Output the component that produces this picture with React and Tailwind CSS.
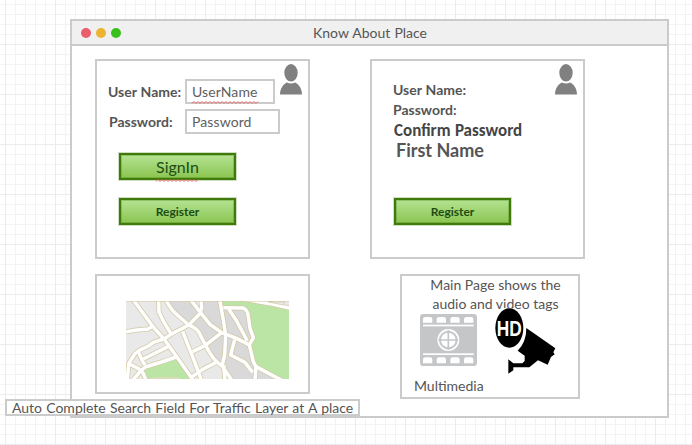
import React from "react";

const ROADS = [
  "M128 102 L188 184 L222 222 L265 282 L310 346",
  "M104 201 L140 195 L174 192 L188 184",
  "M206 104 L207 142 L222 172 L243 206",
  "M226 102 Q245 138 262 150 L296 180",
  "M222 222 L243 208 L296 180 L328 148 L335 130 L333 104",
  "M302 104 L331 142 L360 178 L395 203 L440 220 L478 240",
  "M389 104 L400 165 L407 210 L404 270 L396 303",
  "M296 180 Q325 190 333 215 L348 243 Q368 285 396 303 L426 346",
  "M278 200 L300 255 L325 320 L334 346",
  "M308 260 L345 242 L395 203",
  "M302 338 L340 312 L378 292",
  "M400 128 L460 129 Q474 136 475 155 L480 190 L490 218 L478 240 L490 290 L498 305 L575 346",
  "M416 132 L440 168 L472 228",
  "M434 224 L422 270 L465 292 L488 322",
  "M498 305 L495 346",
  "M450 101 L540 116 L602 130",
  "M222 222 L190 232 L175 243 L148 256 L135 266 L116 296 L112 346",
  "M146 262 L158 290 L166 300",
  "M234 245 L160 282",
  "M258 276 L215 291 L166 306 L152 318",
  "M116 296 L148 312 L160 325 L168 346",
  "M152 318 L128 346",
  "M401 300 L405 346",
];

function StreetMap() {
  return (
    <svg className="block h-[78px] w-[163px]" viewBox="108 108 489 234" preserveAspectRatio="none">
      <rect x="108" y="108" width="489" height="234" fill="#e9e9e9" />
      <path
        fill="#d9d9d9"
        d="M228 108H300L330 142L296 180L262 150Z M335 108H389L400 170V203L360 178L328 142Z M296 180L328 146L395 203L345 240L330 205Z M345 240L407 205L404 270L396 303Z M395 128H460L475 150L490 220L478 240L404 208Z M404 208L478 240L495 342H425L396 303Z M498 305L570 342H495Z"
      />
      <path fill="#bbe5a5" d="M389 108H480L597 130V342H572L498 305L478 240L490 218L475 140L460 129H395Z" />
      <path fill="#bbe5a5" d="M160 314L262 281L304 342H166Z" />
      <g fill="none" stroke="#d3c9a4" strokeWidth="15" strokeLinejoin="round">
        {ROADS.map((d) => <path key={d} d={d} />)}
      </g>
      <g fill="none" stroke="#fff" strokeWidth="10.5" strokeLinejoin="round">
        {ROADS.map((d) => <path key={d} d={d} />)}
      </g>
      <path d="M108 109H597" stroke="#d3c9a4" strokeWidth="2" />
      <path d="M535 111L580 120L584 111Z" fill="#e9e9e9" stroke="#d3c9a4" strokeWidth="2" />
      <path d="M180 341Q225 335 270 341" fill="none" stroke="#e7d9c0" strokeWidth="4" />
    </svg>
  );
}

function FilmIcon() {
  return (
    <svg className="block h-[52px] w-[57px]" viewBox="75 138 171 156">
      <rect x="75" y="138" width="171" height="156" rx="10" fill="#c5c6c8" />
      <g fill="#fff">
        {[84, 125, 166, 207].map((x) => (
          <g key={x}>
            <path d={`M${x} 164V153Q${x} 147 ${x + 7} 147H${x + 21}Q${x + 28} 147 ${x + 28} 153V164Z`} />
            <path d={`M${x} 286V275Q${x} 268 ${x + 7} 268H${x + 21}Q${x + 28} 268 ${x + 28} 275V286Z`} />
          </g>
        ))}
        <rect x="84" y="170" width="152" height="5" />
        <rect x="84" y="256" width="152" height="5" />
        <circle cx="160" cy="216" r="33" />
      </g>
      <circle cx="160" cy="216" r="25" fill="none" stroke="#c5c6c8" strokeWidth="6" />
      <path d="M160 186V246M130 216H190" stroke="#c5c6c8" strokeWidth="5" />
    </svg>
  );
}

function CameraIcon() {
  return (
    <svg className="block h-[66px] w-[61px]" viewBox="299 121 183 198">
      <path d="M393 181L480 242L474 254L478 260L467 268L457 291L428 278L402 299H354V308L339 318V275L354 287H381L388 280V264L367 249Q393 224 393 181Z" />
      <ellipse cx="342" cy="181" rx="50" ry="64" fill="#fff" />
      <ellipse cx="342" cy="181" rx="42" ry="59" />
      <text
        x="304"
        y="206"
        textLength="75"
        lengthAdjust="spacingAndGlyphs"
        fill="#fff"
        className="font-['Liberation_Sans'] text-[68px] font-bold"
      >
        HD
      </text>
    </svg>
  );
}

function UserIcon() {
  return (
    <svg className="block h-[31px] w-[22px]" viewBox="0 0 22 31" fill="#808080">
      <ellipse cx="11" cy="8.8" rx="6.7" ry="8.7" />
      <path d="M0 30.5C0 24 4 19.5 7 18.5Q11 20.5 15 18.5C18 19.5 22 24 22 30.5Z" />
    </svg>
  );
}

function Squiggle({ width }) {
  const points = Array.from({ length: Math.floor(width / 2) + 1 }, (_, i) => `${i * 2},${i % 2 ? 0.5 : 2.5}`).join(" ");
  return (
    <svg className="absolute left-0 block h-[3px] overflow-visible" width={width} height="3">
      <polyline points={points} fill="none" stroke="#f05a5a" strokeWidth="0.9" />
    </svg>
  );
}

function GreenButton({ children }) {
  return (
    <div className="flex h-[27px] w-[117px] items-center justify-center border-2 border-[#407a0b] bg-linear-to-b from-[#b4e391] to-[#8bc550] text-[#1d4d12] shadow-[0_0_0_1px_rgba(64,122,11,0.25),inset_0_0_0_1px_rgba(64,122,11,0.3)]">
      {children}
    </div>
  );
}

export default function App() {
  return (
    <div className="relative h-[445px] w-[692px] overflow-hidden bg-white bg-[linear-gradient(to_right,#ececec_1px,transparent_1px),linear-gradient(to_bottom,#ececec_1px,transparent_1px),linear-gradient(to_right,#f3f3f3_1px,transparent_1px),linear-gradient(to_bottom,#f3f3f3_1px,transparent_1px)] bg-[size:50px_50px,50px_50px,10px_10px,10px_10px] bg-[position:5px_0,0_44px,5px_0,0_4px] pl-[70px] pt-[19px] font-['Lato',sans-serif] text-[14px] text-[#555]">
      <div className="h-[399px] w-[599px] border-2 border-[#cbcbcb] bg-white">
        <header className="flex h-[25px] items-center border-b-2 border-[#cbcbcb] bg-[#f0f0f0] pl-[9px]">
          <div className="flex w-[40px] gap-[5px]">
            <i className="size-[10px] rounded-full bg-[#eb5d6b]" />
            <i className="size-[10px] rounded-full bg-[#edb431]" />
            <i className="size-[10px] rounded-full bg-[#3bbf1d]" />
          </div>
          <h1 className="flex-1 pr-[48px] text-center leading-[20px] [word-spacing:0.5px]">Know About Place</h1>
        </header>
        <main className="flex flex-col gap-[15px] pl-[23px] pt-[13px]">
          <div className="flex gap-[60px]">
            <section className="flex h-[200px] w-[215px] flex-col border-2 border-[#cbcbcb]">
              <div className="flex h-[78px]">
                <div className="flex w-[183px] flex-col gap-[5px] pl-[11px] pt-[18px]">
                  <div className="flex h-[25px] items-center">
                    <label className="w-[77px] shrink-0 whitespace-nowrap font-bold [word-spacing:0.5px]">User Name:</label>
                    <div className="relative flex h-[25px] w-[90px] shrink-0 items-center border-2 border-[#cbcbcb] pl-[5px] text-[#606060]">
                      <span className="tracking-[0.1px]">UserName</span>
                      <div className="absolute left-[5px] top-[20px]"><Squiggle width={66} /></div>
                    </div>
                  </div>
                  <div className="flex h-[25px] items-center">
                    <label className="w-[77px] shrink-0 pl-px font-bold">Password:</label>
                    <div className="flex h-[25px] w-[95px] shrink-0 items-center border-2 border-[#cbcbcb] pl-[5px] tracking-[0.1px] text-[#606060]">Password</div>
                  </div>
                </div>
                <div className="pt-[3px]"><UserIcon /></div>
              </div>
              <div className="flex flex-col gap-[18px] pl-[22px] pt-[14px]">
                <GreenButton>
                  <span className="relative text-[16px] leading-[20px]">
                    SignIn
                    <span className="absolute left-0 top-[22px]"><Squiggle width={42} /></span>
                  </span>
                </GreenButton>
                <GreenButton><span className="text-[12px] font-bold">Register</span></GreenButton>
              </div>
            </section>
            <section className="flex h-[200px] w-[215px] flex-col border-2 border-[#cbcbcb]">
              <div className="flex h-[137px]">
                <div className="flex w-[183px] flex-col whitespace-nowrap pl-[21px] pt-[19px] font-bold leading-[20px]">
                  <p className="[word-spacing:0.5px]">User Name:</p>
                  <p>Password:</p>
                  <p className="pl-px pt-[2px] font-['Carlito','Lato',sans-serif] text-[17px] leading-[18px] text-[#444] [word-spacing:0.6px]">Confirm Password</p>
                  <p className="pl-[3px] text-[18px] leading-[20px]">First Name</p>
                </div>
                <div className="pt-[3px]"><UserIcon /></div>
              </div>
              <div className="pl-[22px]">
                <GreenButton><span className="text-[12px] font-bold">Register</span></GreenButton>
              </div>
            </section>
          </div>
          <div className="flex items-start gap-[90px]">
            <section className="h-[120px] w-[215px] border-2 border-[#cbcbcb] pl-[29px] pt-[25px]">
              <StreetMap />
            </section>
            <section className="h-[125px] w-[180px] border-2 border-[#cbcbcb]">
              <p className="-mt-px h-[33px] whitespace-nowrap pl-[11px] text-center leading-[19px]">
                Main Page shows the<br />audio and video tags
              </p>
              <div className="flex h-[68px] pl-[18px]">
                <div className="w-[75px] pt-[6px]"><FilmIcon /></div>
                <CameraIcon />
              </div>
              <p className="pl-[12px] leading-[20px]">Multimedia</p>
            </section>
          </div>
        </main>
      </div>
      <div className="absolute left-[5px] top-[399px] flex h-[17px] w-[355px] items-center whitespace-nowrap border-2 border-[#cbcbcb] bg-white pl-[5px] leading-[17px] [word-spacing:0.6px]">
        Auto Complete Search Field For Traffic Layer at A place
      </div>
    </div>
  );
}
